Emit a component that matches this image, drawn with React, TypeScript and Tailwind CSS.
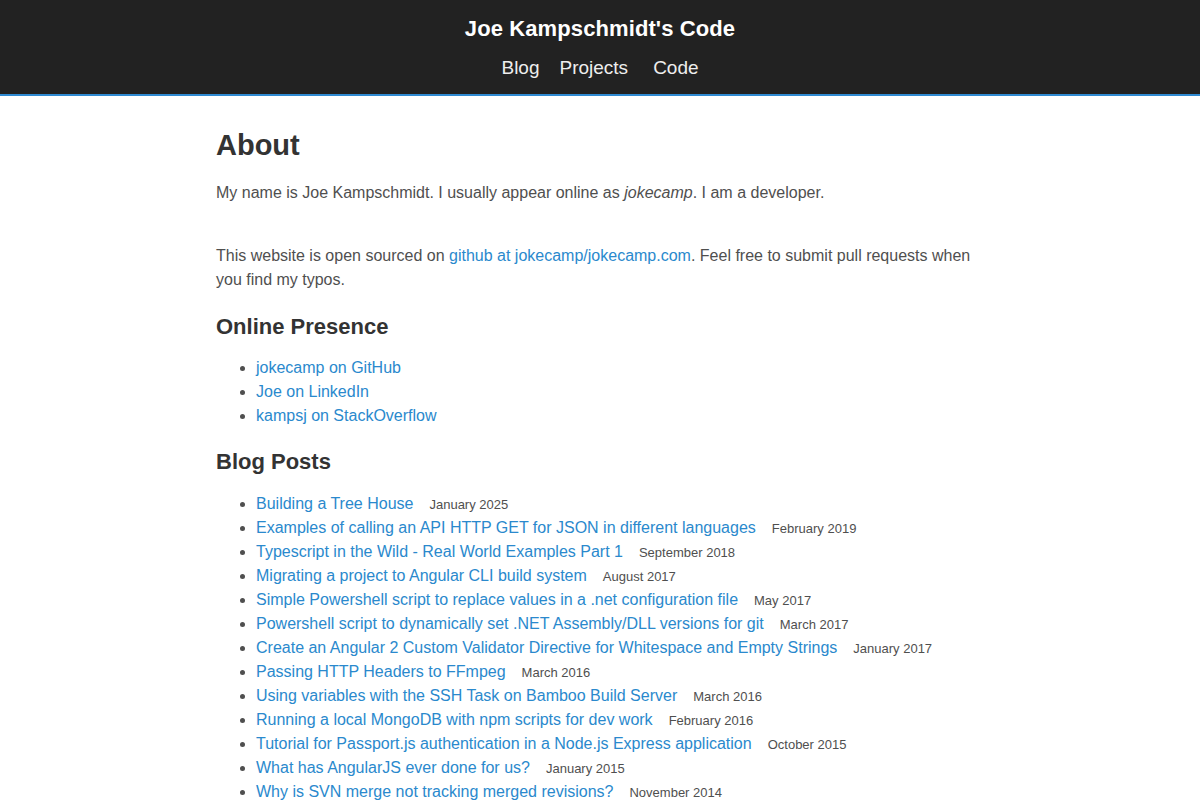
import React from "react";

const posts: { title: string; date: string }[] = [
  { title: "Building a Tree House", date: "January 2025" },
  { title: "Examples of calling an API HTTP GET for JSON in different languages", date: "February 2019" },
  { title: "Typescript in the Wild - Real World Examples Part 1", date: "September 2018" },
  { title: "Migrating a project to Angular CLI build system", date: "August 2017" },
  { title: "Simple Powershell script to replace values in a .net configuration file", date: "May 2017" },
  { title: "Powershell script to dynamically set .NET Assembly/DLL versions for git", date: "March 2017" },
  { title: "Create an Angular 2 Custom Validator Directive for Whitespace and Empty Strings", date: "January 2017" },
  { title: "Passing HTTP Headers to FFmpeg", date: "March 2016" },
  { title: "Using variables with the SSH Task on Bamboo Build Server", date: "March 2016" },
  { title: "Running a local MongoDB with npm scripts for dev work", date: "February 2016" },
  { title: "Tutorial for Passport.js authentication in a Node.js Express application", date: "October 2015" },
  { title: "What has AngularJS ever done for us?", date: "January 2015" },
  { title: "Why is SVN merge not tracking merged revisions?", date: "November 2014" },
];

const presence = ["jokecamp on GitHub", "Joe on LinkedIn", "kampsj on StackOverflow"];

export default function App() {
  return (
    <div className="min-h-screen bg-white text-[#4f4f4f] font-['Liberation_Sans',Arial,sans-serif] text-[16px] leading-[24px]">
      {/* header */}
      <header className="bg-[#222] border-b-2 border-[#2f8ad2] pt-[12px] pb-[12px] text-center">
        <div className="text-white font-bold text-[22px] leading-[33px] tracking-[0.1px]">Joe Kampschmidt's Code</div>
        <nav className="mt-[9px] text-[19px] leading-[28px] text-[#eee] flex justify-center">
          <a href="#" className="mr-5">Blog</a>
          <a href="#" className="mr-[25px]">Projects</a>
          <a href="#">Code</a>
        </nav>
      </header>

      {/* content */}
      <main className="max-w-[800px] mx-auto px-4 pt-[31px]">
        <h1 className="text-[29px] leading-[36px] font-bold text-[#333]">About</h1>
        <p className="mt-[18px]">
          My name is Joe Kampschmidt. I usually appear online as <em>jokecamp</em>. I am a developer.
        </p>
        <p className="mt-[39px]">
          This website is open sourced on{" "}
          <a href="#" className="text-[#2a89cd]">github at jokecamp/jokecamp.com</a>. Feel free to submit pull
          requests when you find my typos.
        </p>

        <h2 className="mt-5 text-[22px] leading-[30px] font-bold text-[#333]">Online Presence</h2>
        <ul className="mt-[14px] list-disc pl-10">
          {presence.map((p) => (
            <li key={p}>
              <a href="#" className="text-[#2a89cd]">{p}</a>
            </li>
          ))}
        </ul>

        <h2 className="mt-[19px] text-[22px] leading-[30px] font-bold text-[#333]">Blog Posts</h2>
        <ul className="mt-[15px] list-disc pl-10 pb-8">
          {posts.map((p) => (
            <li key={p.title}>
              <a href="#" className="text-[#2a89cd]">{p.title}</a>
              <span className="ml-4 text-[13px] leading-none">{p.date}</span>
            </li>
          ))}
        </ul>
      </main>
    </div>
  );
}
